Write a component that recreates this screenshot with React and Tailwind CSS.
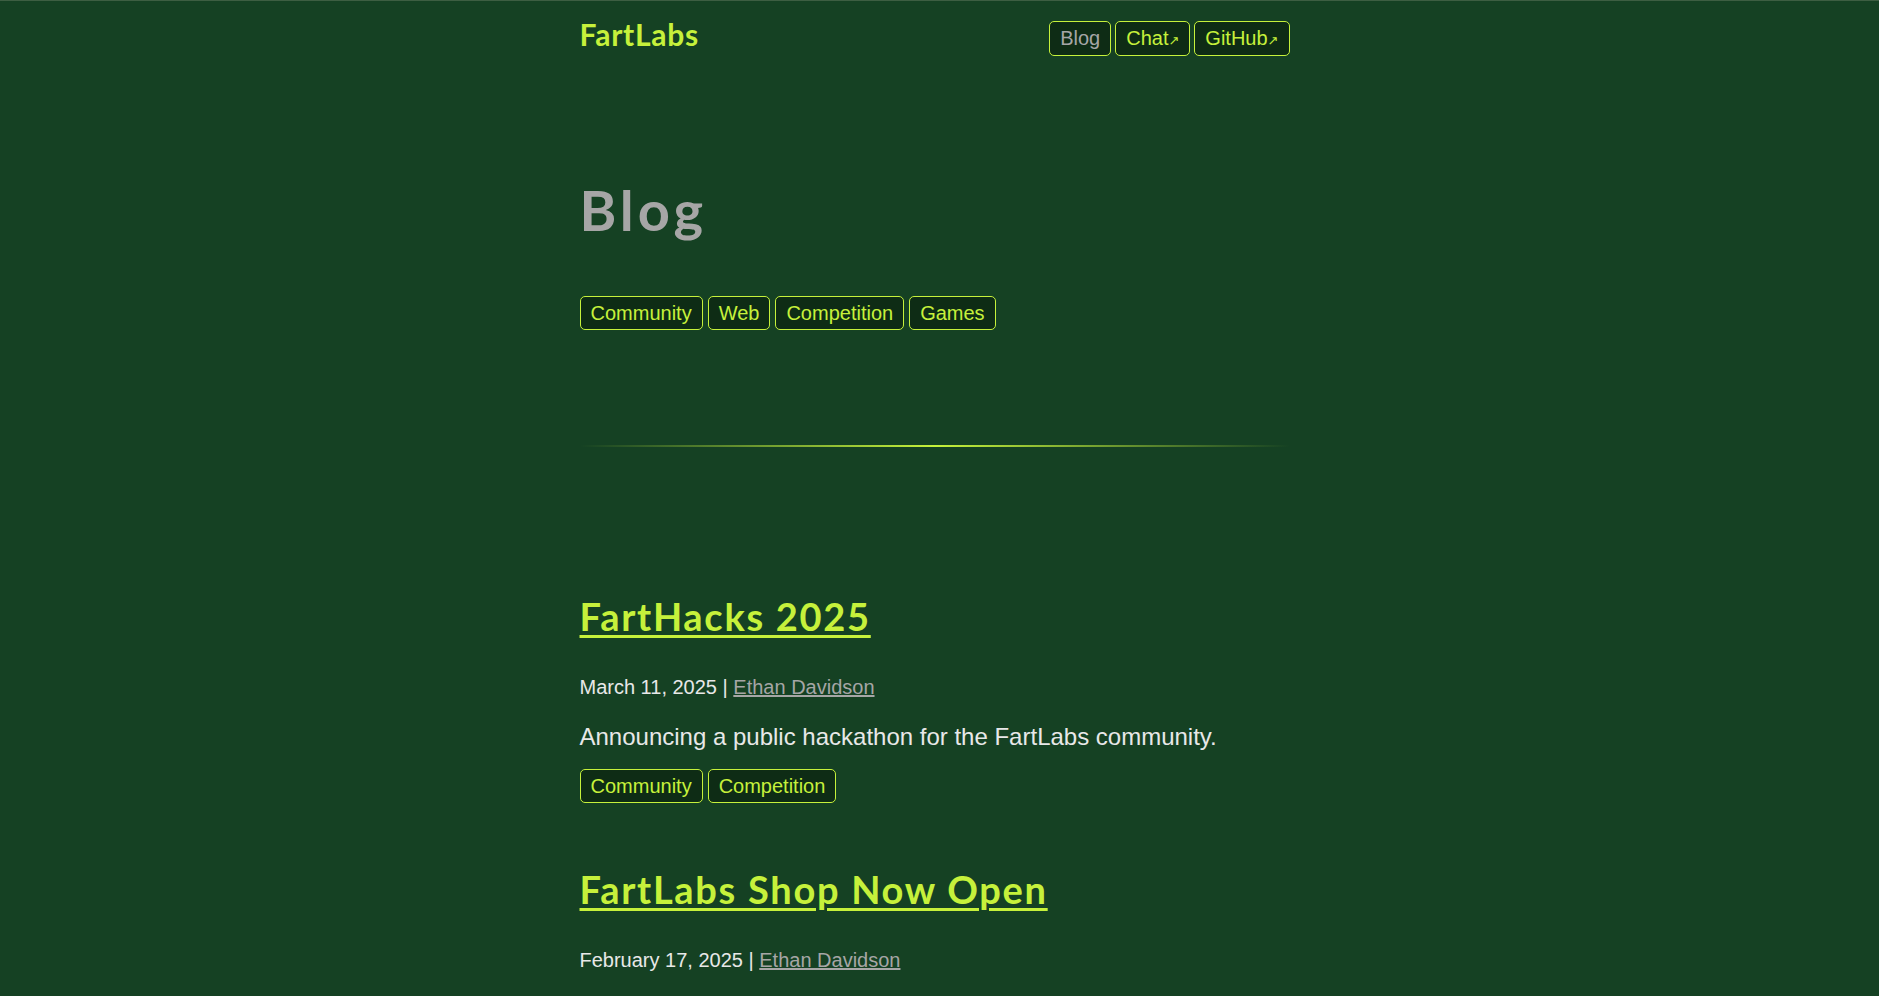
import React from 'react';

const lime = 'text-[#c6f13b]';

const Tag = ({ children }) => (
  <a
    href="#"
    className="rounded-[5px] border border-[#c6f13b] bg-[#0e2c15] px-[10px] py-[5px] text-[20px] leading-[22px] text-[#c6f13b]"
  >
    {children}
  </a>
);

const NavLink = ({ children, active, external }) => (
  <a
    href="#"
    className={
      'flex items-baseline rounded-[5px] border border-[#c6f13b] bg-[#0e2c15] px-[10px] py-[5px] text-[20px] leading-[23px] ' +
      (active ? 'text-[#a6a6a6]' : 'text-[#c6f13b]')
    }
  >
    {children}
    {external && <span className="text-[13px] leading-none font-['DejaVu_Sans',sans-serif]">↗</span>}
  </a>
);

const posts = [
  {
    title: 'FartHacks 2025',
    date: 'March 11, 2025',
    author: 'Ethan Davidson',
    description: 'Announcing a public hackathon for the FartLabs community.',
    tags: ['Community', 'Competition'],
  },
  {
    title: 'FartLabs Shop Now Open',
    date: 'February 17, 2025',
    author: 'Ethan Davidson',
    description: null,
    tags: [],
  },
];

const Post = ({ post, first }) => (
  <article className={first ? 'mt-[150px]' : 'mt-[67px]'}>
    <h2 className="font-['Lato',sans-serif] text-[38px] font-bold leading-none tracking-[0.045em]">
      <a href="#" className={`${lime} underline decoration-[3px] underline-offset-[4px]`}>
        {post.title}
      </a>
    </h2>
    <p className="mt-[37px] text-[20px] leading-[30px] text-[#e8e8e8]">
      {post.date} |{' '}
      <a href="#" className="text-[#a6a6a6] underline">
        {post.author}
      </a>
    </p>
    {post.description && (
      <p className="mt-[17px] text-[24px] leading-[36px] text-[#e8e8e8]">{post.description}</p>
    )}
    {post.tags.length > 0 && (
      <div className="mt-[14px] flex flex-wrap gap-[5px]">
        {post.tags.map((t) => (
          <Tag key={t}>{t}</Tag>
        ))}
      </div>
    )}
  </article>
);

export default function App() {
  return (
    <div className="min-h-screen border-t border-[#3d5e42] bg-[#154123] pb-20 font-['Liberation_Sans',Arial,sans-serif]">
      <div className="flex justify-center pr-[10px]">
        <div className="w-[710px]">
          {/* header */}
          <header className="flex items-start justify-between pt-[20px]">
            <a
              href="#"
              className={`-mt-[2px] font-['Lato',sans-serif] text-[30px] font-bold leading-[30px] tracking-[0.025em] ${lime}`}
            >
              FartLabs
            </a>
            <nav className="flex gap-[4px]">
              <NavLink active>Blog</NavLink>
              <NavLink external>Chat</NavLink>
              <NavLink external>GitHub</NavLink>
            </nav>
          </header>

          <h1 className="mt-[126px] font-['Lato',sans-serif] text-[56px] font-bold leading-none tracking-[0.07em] text-[#a6a6a6]">
            Blog
          </h1>

          <div className="mt-[58px] flex flex-wrap gap-[5px]">
            <Tag>Community</Tag>
            <Tag>Web</Tag>
            <Tag>Competition</Tag>
            <Tag>Games</Tag>
          </div>

          <div className="mt-[115px] h-[2px] bg-[linear-gradient(to_right,transparent,#c6f13b,transparent)]" />

          {posts.map((p, i) => (
            <Post key={p.title} post={p} first={i === 0} />
          ))}
        </div>
      </div>
    </div>
  );
}
